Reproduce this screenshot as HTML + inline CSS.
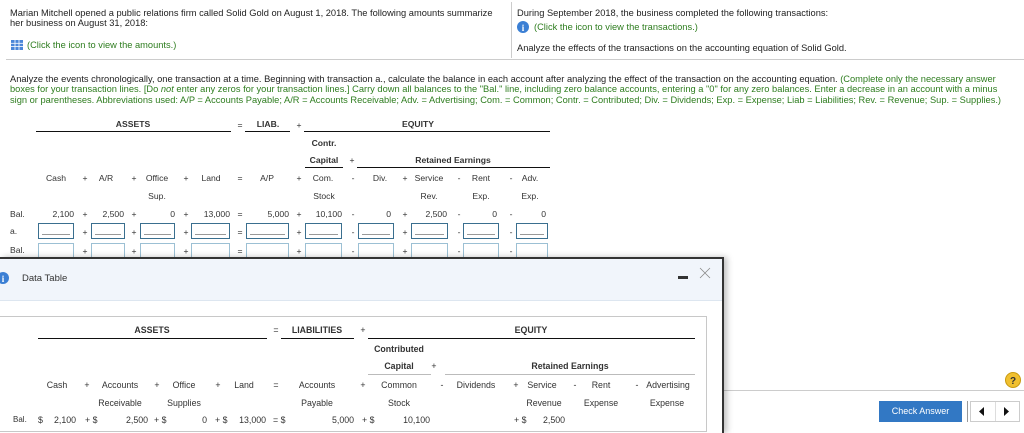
<!DOCTYPE html>
<html><head><meta charset="utf-8"><style>
*{margin:0;padding:0;box-sizing:border-box}
body{width:1024px;height:433px;overflow:hidden;background:#fff;font-family:"Liberation Sans",Arial,sans-serif;color:#222;position:relative}
.a{position:absolute;white-space:nowrap;font-size:9.3px;line-height:10px}
.g{color:#2e7d1f}
.b{font-weight:bold}
.c{transform:translateX(-50%)}
.r{transform:translateX(-100%)}
.l{position:absolute;height:1px;background:#111}
.lg{position:absolute;height:1px;background:#bbb}
.box{position:absolute;height:16px;border:1px solid #3a6f8f;background:#fff}
.box2{position:absolute;height:16px;border:1px solid #9cc0d4;border-bottom:none;background:#fff}
.box i{position:absolute;left:3px;right:3px;bottom:3px;height:1px;background:#999}
.t{font-size:8.6px;color:#333}
.m{font-size:8.8px;color:#333}
</style></head><body>
<div class="a" style="left:10px;top:8px">Marian Mitchell opened a public relations firm called Solid Gold on August 1, 2018. The following amounts summarize</div>
<div class="a" style="left:10px;top:18px">her business on August 31, 2018:</div>
<svg style="position:absolute;left:11px;top:40px" width="12" height="10"><rect x="0" y="0" width="12" height="10" fill="#4a86d8"/><g stroke="#fff" stroke-width="0.8"><line x1="0" y1="3.3" x2="12" y2="3.3"/><line x1="0" y1="6.6" x2="12" y2="6.6"/><line x1="4" y1="0" x2="4" y2="10"/><line x1="8" y1="0" x2="8" y2="10"/></g></svg>
<div class="a g" style="left:27px;top:40px">(Click the icon to view the amounts.)</div>
<div style="position:absolute;left:511px;top:2px;width:1px;height:56px;background:#ccc"></div>
<div style="position:absolute;left:6px;top:59px;width:1018px;height:1px;background:#ccc"></div>
<div class="a" style="left:517px;top:8px">During September 2018, the business completed the following transactions:</div>
<svg style="position:absolute;left:517px;top:21px" width="12" height="12"><circle cx="6" cy="6" r="6" fill="#3b7fd4"/><text x="6" y="10" font-size="9" font-weight="bold" fill="#fff" text-anchor="middle" font-family="Liberation Serif">i</text></svg>
<div class="a g" style="left:534px;top:22px">(Click the icon to view the transactions.)</div>
<div class="a" style="left:517px;top:43px">Analyze the effects of the transactions on the accounting equation of Solid Gold.</div>

<div class="a" style="left:10px;top:74px">Analyze the events chronologically, one transaction at a time. Beginning with transaction a., calculate the balance in each account after analyzing the effect of the transaction on the accounting equation. <span class="g">(Complete only the necessary answer</span></div>
<div class="a g" style="left:10px;top:84px">boxes for your transaction lines. [Do <i>not</i> enter any zeros for your transaction lines.] Carry down all balances to the "Bal." line, including zero balance accounts, entering a "0" for any zero balances. Enter a decrease in an account with a minus</div>
<div class="a g" style="left:10px;top:95px">sign or parentheses. Abbreviations used: A/P = Accounts Payable; A/R = Accounts Receivable; Adv. = Advertising; Com. = Common; Contr. = Contributed; Div. = Dividends; Exp. = Expense; Liab = Liabilities; Rev. = Revenue; Sup. = Supplies.)</div>

<div class="a t b c" style="left:133px;top:119px">ASSETS</div><div class="l" style="left:36px;top:131px;width:195px"></div>
<div class="a t c" style="left:240px;top:120px">=</div>
<div class="a t b c" style="left:268px;top:119px">LIAB.</div><div class="l" style="left:245px;top:131px;width:45px"></div>
<div class="a t c" style="left:299px;top:120px">+</div>
<div class="a t b c" style="left:418px;top:119px">EQUITY</div><div class="l" style="left:304px;top:131px;width:246px"></div>
<div class="a t b c" style="left:324px;top:138px">Contr.</div>
<div class="a t b c" style="left:324px;top:155px">Capital</div><div class="l" style="left:305px;top:167px;width:38px"></div>
<div class="a t c" style="left:352px;top:155px">+</div>
<div class="a t b c" style="left:453px;top:155px">Retained Earnings</div><div class="l" style="left:357px;top:167px;width:193px"></div>

<div class="a t c" style="left:56px;top:173px">Cash</div><div class="a t c" style="left:85px;top:173px">+</div><div class="a t c" style="left:106px;top:173px">A/R</div><div class="a t c" style="left:134px;top:173px">+</div><div class="a t c" style="left:157px;top:173px">Office</div><div class="a t c" style="left:186px;top:173px">+</div><div class="a t c" style="left:211px;top:173px">Land</div><div class="a t c" style="left:240px;top:173px">=</div><div class="a t c" style="left:267px;top:173px">A/P</div><div class="a t c" style="left:299px;top:173px">+</div><div class="a t c" style="left:323px;top:173px">Com.</div><div class="a t c" style="left:353px;top:173px">-</div><div class="a t c" style="left:380px;top:173px">Div.</div><div class="a t c" style="left:405px;top:173px">+</div><div class="a t c" style="left:429px;top:173px">Service</div><div class="a t c" style="left:459px;top:173px">-</div><div class="a t c" style="left:481px;top:173px">Rent</div><div class="a t c" style="left:511px;top:173px">-</div><div class="a t c" style="left:530px;top:173px">Adv.</div>
<div class="a t c" style="left:157px;top:191px">Sup.</div><div class="a t c" style="left:324px;top:191px">Stock</div><div class="a t c" style="left:429px;top:191px">Rev.</div><div class="a t c" style="left:481px;top:191px">Exp.</div><div class="a t c" style="left:530px;top:191px">Exp.</div>

<div class="a t" style="left:10px;top:209px">Bal.</div>
<div class="a t r" style="left:74px;top:209px">2,100</div><div class="a t c" style="left:85px;top:209px">+</div><div class="a t r" style="left:124px;top:209px">2,500</div><div class="a t c" style="left:134px;top:209px">+</div><div class="a t r" style="left:175px;top:209px">0</div><div class="a t c" style="left:186px;top:209px">+</div><div class="a t r" style="left:230px;top:209px">13,000</div><div class="a t c" style="left:240px;top:209px">=</div><div class="a t r" style="left:289px;top:209px">5,000</div><div class="a t c" style="left:299px;top:209px">+</div><div class="a t r" style="left:342px;top:209px">10,100</div><div class="a t c" style="left:353px;top:209px">-</div><div class="a t r" style="left:391px;top:209px">0</div><div class="a t c" style="left:405px;top:209px">+</div><div class="a t r" style="left:447px;top:209px">2,500</div><div class="a t c" style="left:459px;top:209px">-</div><div class="a t r" style="left:497px;top:209px">0</div><div class="a t c" style="left:511px;top:209px">-</div><div class="a t r" style="left:546px;top:209px">0</div>

<div class="a t" style="left:10px;top:226px">a.</div>
<div class="box" style="left:38px;top:223px;width:36px"><i></i></div><div class="a t c" style="left:85px;top:227px">+</div>
<div class="box" style="left:91px;top:223px;width:34px"><i></i></div><div class="a t c" style="left:134px;top:227px">+</div>
<div class="box" style="left:140px;top:223px;width:35px"><i></i></div><div class="a t c" style="left:186px;top:227px">+</div>
<div class="box" style="left:191px;top:223px;width:39px"><i></i></div><div class="a t c" style="left:240px;top:227px">=</div>
<div class="box" style="left:246px;top:223px;width:43px"><i></i></div><div class="a t c" style="left:299px;top:227px">+</div>
<div class="box" style="left:305px;top:223px;width:37px"><i></i></div><div class="a t c" style="left:353px;top:227px">-</div>
<div class="box" style="left:358px;top:223px;width:36px"><i></i></div><div class="a t c" style="left:405px;top:227px">+</div>
<div class="box" style="left:411px;top:223px;width:37px"><i></i></div><div class="a t c" style="left:459px;top:227px">-</div>
<div class="box" style="left:463px;top:223px;width:36px"><i></i></div><div class="a t c" style="left:511px;top:227px">-</div>
<div class="box" style="left:516px;top:223px;width:32px"><i></i></div>

<div class="a t" style="left:10px;top:245px">Bal.</div>
<div class="box2" style="left:38px;top:243px;width:36px"></div><div class="a t c" style="left:85px;top:246px">+</div>
<div class="box2" style="left:91px;top:243px;width:34px"></div><div class="a t c" style="left:134px;top:246px">+</div>
<div class="box2" style="left:140px;top:243px;width:35px"></div><div class="a t c" style="left:186px;top:246px">+</div>
<div class="box2" style="left:191px;top:243px;width:39px"></div><div class="a t c" style="left:240px;top:246px">=</div>
<div class="box2" style="left:246px;top:243px;width:43px"></div><div class="a t c" style="left:299px;top:246px">+</div>
<div class="box2" style="left:305px;top:243px;width:37px"></div><div class="a t c" style="left:353px;top:246px">-</div>
<div class="box2" style="left:358px;top:243px;width:36px"></div><div class="a t c" style="left:405px;top:246px">+</div>
<div class="box2" style="left:411px;top:243px;width:37px"></div><div class="a t c" style="left:459px;top:246px">-</div>
<div class="box2" style="left:463px;top:243px;width:36px"></div><div class="a t c" style="left:511px;top:246px">-</div>
<div class="box2" style="left:516px;top:243px;width:32px"></div>

<div style="position:absolute;left:724px;top:390px;width:300px;height:1px;background:#ccc"></div>
<svg style="position:absolute;left:1005px;top:372px" width="16" height="16"><circle cx="8" cy="8" r="7.5" fill="#f0c030" stroke="#c99a10"/><text x="8" y="12" font-size="10" font-weight="bold" fill="#333" text-anchor="middle" font-family="Liberation Sans">?</text></svg>
<div style="position:absolute;left:879px;top:401px;width:83px;height:21px;background:#3278c4;color:#fff;font-size:9px;line-height:21px;text-align:center">Check Answer</div>
<div style="position:absolute;left:967px;top:401px;width:1px;height:21px;background:#999"></div>
<div style="position:absolute;left:970px;top:401px;width:50px;height:21px;border:1px solid #ccc;background:#fff"></div>
<div style="position:absolute;left:995px;top:402px;width:1px;height:19px;background:#ddd"></div>
<svg style="position:absolute;left:978px;top:406px" width="40" height="11"><polygon points="6,1 6,10 1,5.5" fill="#111"/><polygon points="26,1 26,10 31,5.5" fill="#111"/></svg>

<div style="position:absolute;left:0;top:257px;width:724px;height:176px;background:#fff;border-top:2px solid #333;border-right:2px solid #333;box-shadow:3px 0 6px rgba(0,0,0,.25)">
<div style="position:absolute;left:0;top:0;width:722px;height:42px;background:#f1f5fb;border-bottom:1px solid #dde6f0"></div>
</div>
<svg style="position:absolute;left:-3px;top:272px" width="12" height="12"><circle cx="6" cy="6" r="6" fill="#3b7fd4"/><text x="6" y="10" font-size="9" font-weight="bold" fill="#fff" text-anchor="middle" font-family="Liberation Serif">i</text></svg>
<div class="a m" style="left:22px;top:274px;font-size:9.5px">Data Table</div>
<div style="position:absolute;left:678px;top:276px;width:10px;height:3px;background:#333"></div>
<svg style="position:absolute;left:699px;top:267px" width="12" height="12"><path d="M1 1L11 11M11 1L1 11" stroke="#888" stroke-width="0.8"/></svg>
<div style="position:absolute;left:-1px;top:316px;width:708px;height:116px;border:1px solid #c8c8c8"></div>

<div class="a b m c" style="left:152px;top:325px">ASSETS</div><div class="l" style="left:38px;top:338px;width:229px"></div>
<div class="a m c" style="left:276px;top:325px">=</div>
<div class="a b m c" style="left:317px;top:325px">LIABILITIES</div><div class="l" style="left:281px;top:338px;width:73px"></div>
<div class="a m c" style="left:363px;top:325px">+</div>
<div class="a b m c" style="left:531px;top:325px">EQUITY</div><div class="l" style="left:368px;top:338px;width:327px"></div>
<div class="a b m c" style="left:399px;top:344px">Contributed</div>
<div class="a b m c" style="left:399px;top:361px">Capital</div><div class="lg" style="left:368px;top:374px;width:63px"></div>
<div class="a m c" style="left:434px;top:361px">+</div>
<div class="a b m c" style="left:570px;top:361px">Retained Earnings</div><div class="lg" style="left:445px;top:374px;width:250px"></div>

<div class="a m c" style="left:57px;top:380px">Cash</div><div class="a m c" style="left:87px;top:380px">+</div><div class="a m c" style="left:120px;top:380px">Accounts</div><div class="a m c" style="left:157px;top:380px">+</div><div class="a m c" style="left:184px;top:380px">Office</div><div class="a m c" style="left:218px;top:380px">+</div><div class="a m c" style="left:244px;top:380px">Land</div><div class="a m c" style="left:276px;top:380px">=</div><div class="a m c" style="left:317px;top:380px">Accounts</div><div class="a m c" style="left:363px;top:380px">+</div><div class="a m c" style="left:399px;top:380px">Common</div><div class="a m c" style="left:442px;top:380px">-</div><div class="a m c" style="left:476px;top:380px">Dividends</div><div class="a m c" style="left:516px;top:380px">+</div><div class="a m c" style="left:542px;top:380px">Service</div><div class="a m c" style="left:575px;top:380px">-</div><div class="a m c" style="left:601px;top:380px">Rent</div><div class="a m c" style="left:637px;top:380px">-</div><div class="a m c" style="left:668px;top:380px">Advertising</div>
<div class="a m c" style="left:120px;top:398px">Receivable</div><div class="a m c" style="left:184px;top:398px">Supplies</div><div class="a m c" style="left:317px;top:398px">Payable</div><div class="a m c" style="left:399px;top:398px">Stock</div><div class="a m c" style="left:544px;top:398px">Revenue</div><div class="a m c" style="left:601px;top:398px">Expense</div><div class="a m c" style="left:667px;top:398px">Expense</div>
<div class="a m" style="left:13px;top:415px;font-size:8px">Bal.</div>
<div class="a m" style="left:38px;top:415px">$</div><div class="a m r" style="left:76px;top:415px">2,100</div>
<div class="a m" style="left:85px;top:415px">+ $</div><div class="a m r" style="left:148px;top:415px">2,500</div>
<div class="a m" style="left:154px;top:415px">+ $</div><div class="a m r" style="left:207px;top:415px">0</div>
<div class="a m" style="left:215px;top:415px">+ $</div><div class="a m r" style="left:266px;top:415px">13,000</div>
<div class="a m" style="left:273px;top:415px">= $</div><div class="a m r" style="left:354px;top:415px">5,000</div>
<div class="a m" style="left:362px;top:415px">+ $</div><div class="a m r" style="left:430px;top:415px">10,100</div>
<div class="a m" style="left:514px;top:415px">+ $</div><div class="a m r" style="left:565px;top:415px">2,500</div>
</body></html>
